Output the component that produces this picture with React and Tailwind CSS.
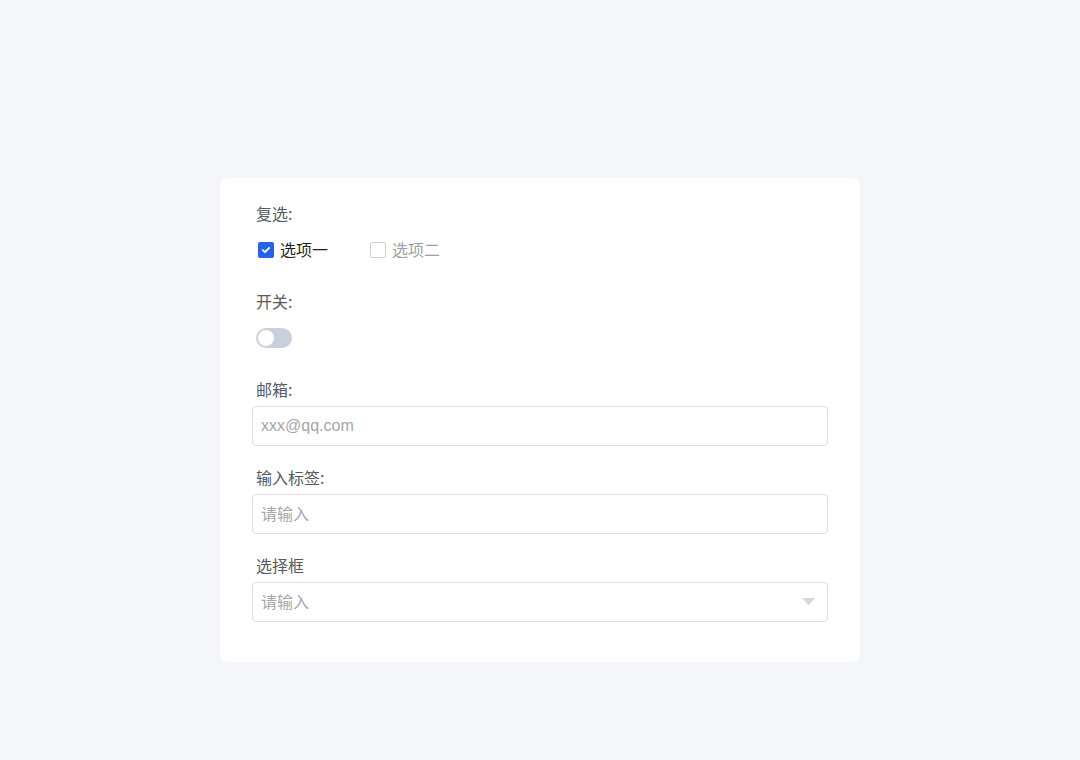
import React from "react";

const font = { fontFamily: '"Noto Sans CJK SC", "Noto Sans", sans-serif' };

function Label({ children }) {
  return (
    <div className="h-6 pl-1 text-[16px] leading-[22px] text-[#555a63]">{children}</div>
  );
}

export default function App() {
  return (
    <div className="min-h-[760px] w-full bg-[#f5f6fa] pt-[178px]" style={font}>
      <div className="mx-auto w-[640px] rounded-lg bg-white px-8 pt-6 pb-5">
        <div className="mb-5">
          <Label>复选:</Label>
          <div className="mt-1 flex h-10 items-center pl-1.5">
            <label className="flex items-center">
              <span className="flex h-4 w-4 items-center justify-center rounded-[2px] bg-[#2563eb]">
                <svg width="10" height="10" viewBox="0 0 10 10" fill="none">
                  <path d="M1.8 5.2 L4 7.2 L8.2 2.8" stroke="white" strokeWidth="1.8" strokeLinecap="round" strokeLinejoin="round" />
                </svg>
              </span>
              <span className="ml-1.5 pb-0.5 text-[16px] leading-6 text-[#1f1f1f]">选项一</span>
            </label>
            <label className="ml-[42px] flex items-center">
              <span className="h-4 w-4 rounded-[2px] border border-[#c9ced8] bg-white" />
              <span className="ml-1.5 pb-0.5 text-[16px] leading-6 text-[#9a9ea6]">选项二</span>
            </label>
          </div>
        </div>

        <div className="mb-5">
          <Label>开关:</Label>
          <div className="mt-1 flex h-10 items-center pl-1">
            <div className="flex h-5 w-9 items-center rounded-full bg-[#c9cfdb] px-px">
              <div className="h-[18px] w-[18px] rounded-full border border-[#c9cfdb] bg-white" />
            </div>
          </div>
        </div>

        <div className="mb-5">
          <Label>邮箱:</Label>
          <div className="mt-1 flex h-10 items-center rounded border border-[#dcdfe6] px-2 pb-px text-[16px] text-[#a3a6ad]" style={{ fontFamily: '"Liberation Sans", "Noto Sans CJK SC", sans-serif' }}>
            xxx@qq.com
          </div>
        </div>

        <div className="mb-5">
          <Label>输入标签:</Label>
          <div className="mt-1 flex h-10 items-center rounded border border-[#dcdfe6] px-2 pb-0.5 text-[16px] text-[#a3a6ad]">
            请输入
          </div>
        </div>

        <div className="mb-5">
          <Label>选择框</Label>
          <div className="mt-1 flex h-10 items-center justify-between rounded border border-[#dcdfe6] px-2 text-[16px] text-[#a3a6ad]">
            <span className="pb-0.5">请输入</span>
            <svg width="13" height="8" viewBox="0 0 13 8" className="mr-1">
              <path d="M0 0 H13 L6.5 7.5 Z" fill="#d5d8de" />
            </svg>
          </div>
        </div>
      </div>
    </div>
  );
}
